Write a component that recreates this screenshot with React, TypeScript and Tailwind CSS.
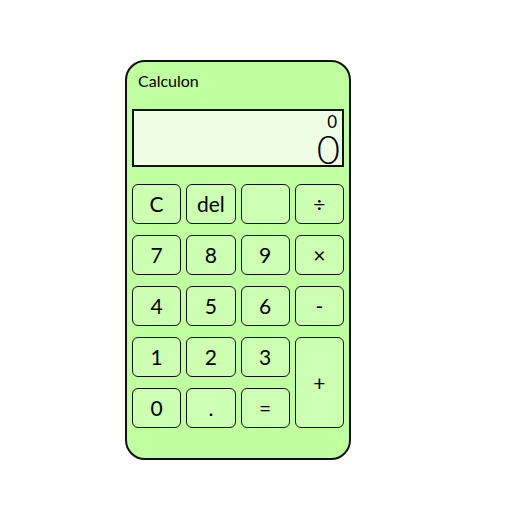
import React from 'react';

const KEYS: { label: string; span?: boolean }[] = [
  { label: 'C' }, { label: 'del' }, { label: '' }, { label: '÷' },
  { label: '7' }, { label: '8' }, { label: '9' }, { label: '×' },
  { label: '4' }, { label: '5' }, { label: '6' }, { label: '-' },
  { label: '1' }, { label: '2' }, { label: '3' }, { label: '+', span: true },
  { label: '0' }, { label: '.' }, { label: '=' },
];

export default function App() {
  return (
    <div className="w-[512px] h-[512px] bg-white pt-[60px] pl-[125px] font-['Lato',sans-serif] text-black">
      <div className="w-[226px] h-[400px] bg-[#bfff9f] border-2 border-[#111] rounded-[20px] flex flex-col px-[5px]">
        <div className="h-[47px] pl-[6px] pt-[11px] text-[16px] leading-[16px]">Calculon</div>
        <div className="h-[58px] bg-[#efffe6] border-2 border-[#111] flex flex-col items-end pr-[2px]">
          <div className="text-[17px] leading-[15px] mt-[3px] mr-[3px]">0</div>
          <div className="text-[40px] leading-[30px] font-light mt-[5px]">0</div>
        </div>
        <div className="mt-[17px] grid grid-cols-4 grid-rows-[repeat(5,40px)] gap-x-[5px] gap-y-[11px]">
          {KEYS.map((k, i) => (
            <div
              key={i}
              className={`bg-[#ccffb2] border-[1.5px] border-[#111] rounded-[6px] flex items-center justify-center text-[21px] ${k.span ? 'row-span-2' : ''}`}
            >
              {k.label}
            </div>
          ))}
        </div>
      </div>
    </div>
  );
}
